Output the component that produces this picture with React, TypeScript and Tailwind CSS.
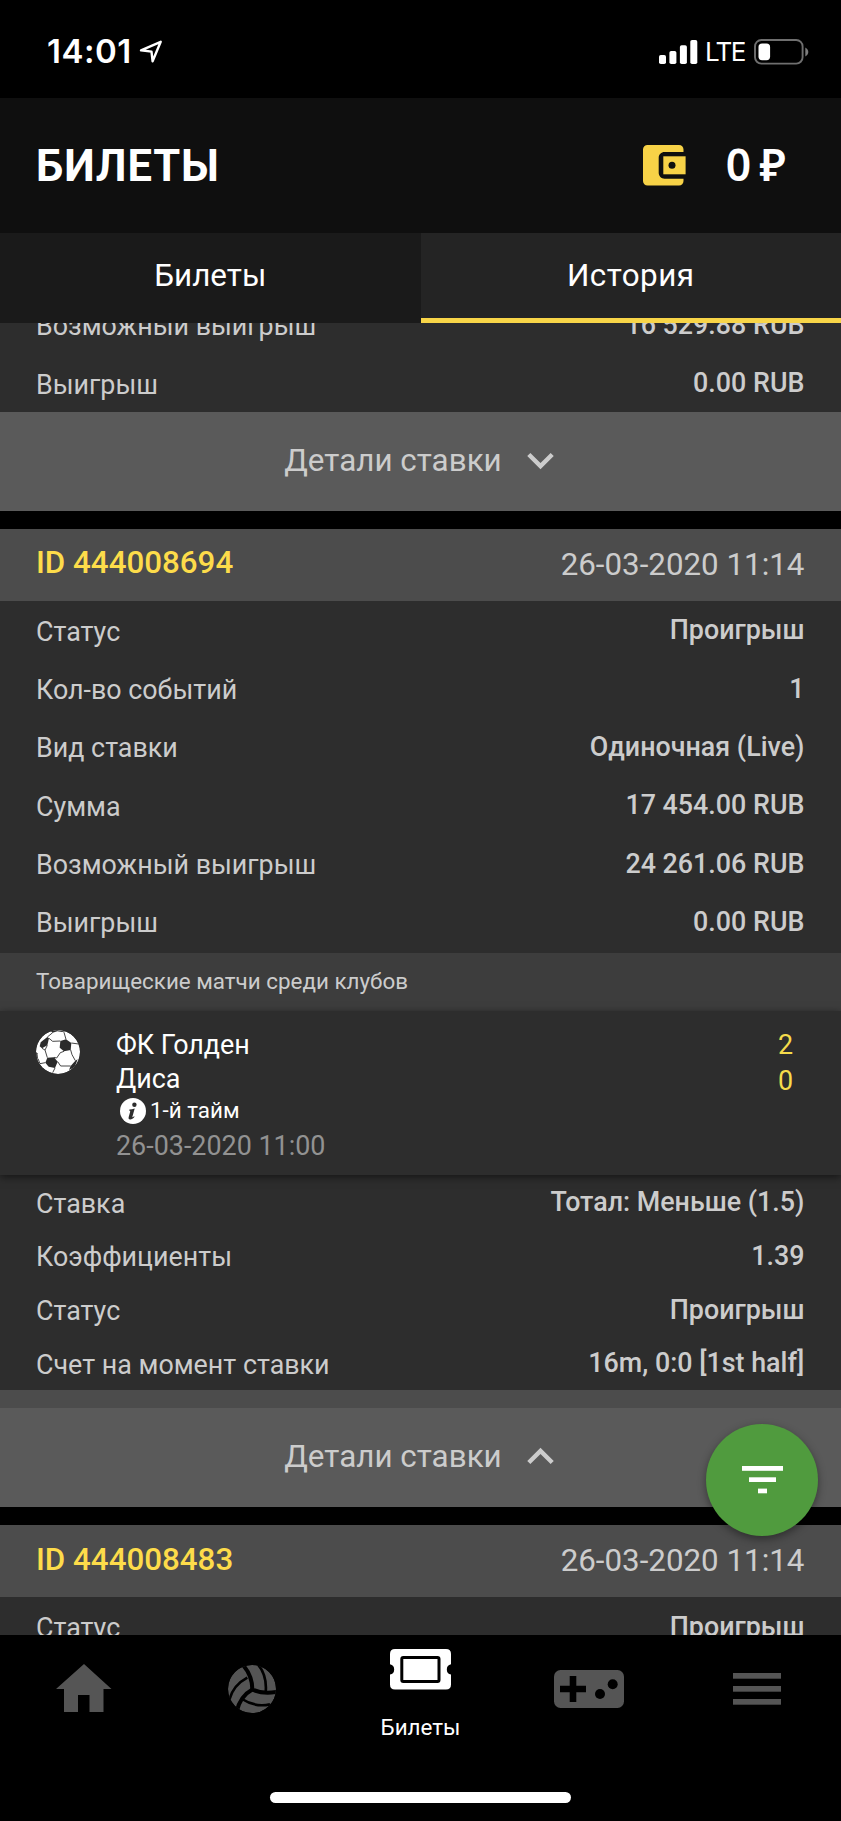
import clsx from "clsx";
import { MdExpandLess, MdExpandMore } from "react-icons/md";

interface Row {
  label: string;
  value: string;
}

const previousRows: Row[] = [
  { label: "Возможный выигрыш", value: "16 529.88 RUB" },
  { label: "Выигрыш", value: "0.00 RUB" },
];

const ticketRows: Row[] = [
  { label: "Статус", value: "Проигрыш" },
  { label: "Кол-во событий", value: "1" },
  { label: "Вид ставки", value: "Одиночная (Live)" },
  { label: "Сумма", value: "17 454.00 RUB" },
  { label: "Возможный выигрыш", value: "24 261.06 RUB" },
  { label: "Выигрыш", value: "0.00 RUB" },
];

const betRows: Row[] = [
  { label: "Ставка", value: "Тотал: Меньше (1.5)" },
  { label: "Коэффициенты", value: "1.39" },
  { label: "Статус", value: "Проигрыш" },
  { label: "Счет на момент ставки", value: "16m, 0:0 [1st half]" },
];

const LocationIcon = () => (
  <svg width="24" height="24" viewBox="0 0 24 24" fill="none">
    <path
      d="M2 10.3 21.7 1.8 13.6 21.3 12.5 11.6Z"
      stroke="white"
      strokeWidth="2.4"
      strokeLinejoin="round"
    />
  </svg>
);

const SignalIcon = () => (
  <svg width="39" height="24" viewBox="0 0 39 24" fill="white">
    <rect x="0" y="15" width="7" height="9" rx="1.8" />
    <rect x="10.4" y="11" width="7" height="13" rx="1.8" />
    <rect x="20.9" y="5.3" width="7" height="18.7" rx="1.8" />
    <rect x="31.3" y="0" width="7" height="24" rx="1.8" />
  </svg>
);

const BatteryIcon = () => (
  <svg width="56" height="26" viewBox="0 0 56 26" fill="none">
    <rect x="1" y="1" width="47.6" height="23.6" rx="6.4" stroke="#6f6f6f" strokeWidth="1.9" />
    <rect x="4.5" y="4.4" width="11.6" height="16.8" rx="3.6" fill="white" />
    <path d="M51.3 8.4c4 2 4 7 0 9z" fill="#7d7d7d" />
  </svg>
);

const WalletIcon = () => (
  <svg width="43" height="41" viewBox="0 0 43 41">
    <path
      fill="#f7d247"
      d="M4.6 0H36c2.6 0 4.5 2 4.5 4.6V7H21.6c-3.4 0-5.9 2.5-5.9 5.9v14.9c0 3.4 2.5 5.9 5.9 5.9h18.9v2.4c0 2.6-1.9 4.5-4.5 4.5H4.6C2 40.6 0 38.7 0 36.1V4.6C0 2 2 0 4.6 0Z"
    />
    <path fill="#f7d247" d="M20.3 11.3H42.6v18H20.3z" />
    <circle cx="29" cy="20.3" r="3.5" fill="#0f0f0f" />
  </svg>
);

const FootballIcon = () => (
  <svg width="44" height="44" viewBox="0 0 132 132">
    <defs>
      <clipPath id="football">
        <circle cx="66" cy="66" r="66" />
      </clipPath>
    </defs>
    <g clipPath="url(#football)">
      <circle cx="66" cy="66" r="66" fill="white" />
      <g fill="#2b2b2b">
        <path d="M73 33 90 28 106 39 104 60 84 64 71 53Z" />
        <path d="M34 83 54 82 65 95 57 114 38 110 28 98Z" />
        <path d="M14 37 34 21 39 25 34 46 18 55 11 49Z" />
        <path d="M118 92 125 88 116 112 99 120 104 108Z" />
        <path d="M44 4 62 0 88 5 84 7 64 4 50 8Z" />
        <path d="M0 66 4 70 6 86 0 84Z" />
      </g>
      <g fill="none" stroke="#2b2b2b" strokeWidth="2.6">
        <path d="M34 21 50 8M39 25 50 34 73 33M34 46 27 60 34 83M18 55 27 60M90 28 84 7M106 39 128 42M84 64 73 68 62 84 54 82M104 60 108 74 118 92M65 95 74 108 104 108M57 114 50 128M28 98 12 101 6 86" />
      </g>
    </g>
  </svg>
);

const InfoIcon = () => (
  <svg width="26" height="26" viewBox="0 0 26 26">
    <circle cx="13" cy="13" r="13" fill="white" />
    <circle cx="14.4" cy="6.7" r="2.2" fill="#2d2d2d" />
    <path
      d="M9.4 11.6c1.8-.2 3.5-.5 5.3-1.1l-2.3 8.3c-.2.7.4.6 1.6-.5l.6.5c-1.6 2-3.1 2.8-4.5 2.7-1.4-.1-1.8-1.2-1.4-2.6l1.4-5c.3-1-.1-1.4-.9-1.5z"
      fill="#2d2d2d"
    />
  </svg>
);

const FilterIcon = () => (
  <svg width="41" height="28" viewBox="0 0 41 28" fill="white">
    <rect x="0" y="0" width="41" height="4.8" />
    <rect x="7" y="11.3" width="27" height="4.7" />
    <rect x="16" y="22.6" width="9" height="4.7" />
  </svg>
);

const HomeIcon = () => (
  <svg width="56" height="48" viewBox="0 0 56 48" fill="#555555">
    <path d="M28 0 55.5 25H47.5V48H33.5V31H22V48H8V25H0Z" />
  </svg>
);

const VolleyballIcon = () => (
  <svg width="48" height="48" viewBox="0 0 144 144">
    <defs>
      <clipPath id="volleyball">
        <circle cx="72" cy="72" r="72" />
      </clipPath>
    </defs>
    <g clipPath="url(#volleyball)" fill="none" stroke="black">
      <circle cx="72" cy="72" r="72" fill="#555555" stroke="none" />
      <g strokeWidth="12">
        <path d="M73 76Q74 34 45 0" />
        <path d="M70 72Q104 90 150 80" />
        <path d="M74 73Q36 94 26 140" />
      </g>
      <g strokeWidth="8">
        <path d="M88 -4Q118 30 113 82" />
        <path d="M42 102Q82 128 126 118" />
        <path d="M58 38Q16 60 4 104" />
      </g>
    </g>
  </svg>
);

const TicketIcon = () => (
  <svg width="61" height="41" viewBox="0 0 61 41">
    <path
      fill="white"
      d="M5 0H56q5 0 5 5V15.3a5.2 5.2 0 0 0 0 10.2V35.5q0 5-5 5H5q-5 0-5-5V25.5a5.2 5.2 0 0 0 0-10.2V5q0-5 5-5Z"
    />
    <rect x="11.8" y="8.4" width="37.2" height="24" rx="1.5" fill="none" stroke="black" strokeWidth="3" />
  </svg>
);

const GamepadIcon = () => (
  <svg width="70" height="38" viewBox="0 0 70 38">
    <rect width="70" height="38" rx="6.5" fill="#555555" />
    <path d="M15.7 6h6.6v9.7H32v6.6h-9.7V32h-6.6v-9.7H6v-6.6h9.7z" fill="black" />
    <circle cx="46" cy="24" r="5" />
    <circle cx="58.7" cy="14.3" r="5" />
  </svg>
);

const MenuIcon = () => (
  <svg width="48" height="32" viewBox="0 0 48 32" fill="#555555">
    <rect width="48" height="5.7" />
    <rect y="13" width="48" height="5.7" />
    <rect y="26" width="48" height="5.7" />
  </svg>
);

const DataRow = ({ row, compact }: { row: Row; compact?: boolean }) => (
  <div
    className={clsx(
      "flex items-center justify-between pr-[36.6px] pl-9 text-[26.85px] text-[#cccccc]",
      compact ? "h-[53.8px]" : "h-[58.3px]"
    )}
  >
    <span className="mt-[3px]">{row.label}</span>
    <span className="font-medium">{row.value}</span>
  </div>
);

const TicketHeader = ({ id, date }: { id: string; date: string }) => (
  <div className="flex h-[72px] shrink-0 items-center justify-between bg-[#4c4c4c] pr-[36.6px] pl-9 text-[31.3px]">
    <span className="mb-[3px] font-medium text-[#fddc4a]">ID {id}</span>
    <span className="text-[#cccccc]">{date}</span>
  </div>
);

const DetailsButton = ({ open }: { open?: boolean }) => (
  <button className="flex h-[99px] w-full shrink-0 items-center justify-center bg-[#5a5a5a] pb-[2px] pl-[10px] text-[31.4px] text-[#cccccc]">
    Детали ставки
    {open ? (
      <MdExpandLess className="ml-3 size-[53px]" />
    ) : (
      <MdExpandMore className="ml-3 size-[53px]" />
    )}
  </button>
);

const StatusBar = () => (
  <div className="flex h-[98px] shrink-0 items-center justify-between pt-[5px] pr-[31px] pl-[47px] font-['Inter',sans-serif] text-white">
    <div className="flex items-center gap-[7px]">
      <span className="text-[33px] font-semibold tracking-[0.5px]">14:01</span>
      <LocationIcon />
    </div>
    <div className="flex items-center">
      <SignalIcon />
      <span className="ml-[7px] text-[26px] tracking-[-1.5px]">LTE</span>
      <span className="ml-[9px]">
        <BatteryIcon />
      </span>
    </div>
  </div>
);

const MatchInfo = () => (
  <div className="relative flex h-[164px] px-9 pt-[17px] text-[26.9px] shadow-[0_2px_8px_rgba(0,0,0,0.55)]">
    <div className="mt-[2px] w-20">
      <FootballIcon />
    </div>
    <div className="mt-px flex-1 leading-[33.5px] text-white">
      <div>ФК Голден</div>
      <div>Диса</div>
      <div className="flex h-[29px] items-center gap-1 pl-1 text-[22.4px]">
        <InfoIcon />
        <span>1-й тайм</span>
      </div>
      <div className="mt-[2px] leading-[38px] text-[#929292]">26-03-2020 11:00</div>
    </div>
    <div className="-mt-px w-[27px] leading-[36px] text-[#f5db4b]">
      <div>2</div>
      <div>0</div>
    </div>
  </div>
);

export default function App() {
  return (
    <div className="relative flex h-[1821px] w-[841px] flex-col overflow-hidden bg-black font-['Roboto',sans-serif]">
      <StatusBar />

      <header className="flex h-[135px] shrink-0 items-center justify-between bg-[#0f0f0f] pr-[55px] pl-9 text-white">
        <h1 className="mt-[2px] text-[43.5px] font-bold tracking-[0.9px]">БИЛЕТЫ</h1>
        <div className="flex items-center">
          <WalletIcon />
          <span className="mb-[2px] ml-10 font-['Noto_Sans',sans-serif] text-[44.5px] font-semibold [word-spacing:-3.2px]">
            0 ₽
          </span>
        </div>
      </header>

      <div className="flex h-[90px] shrink-0 text-[31.4px] text-white">
        <div className="flex flex-1 items-center justify-center bg-[#1a1a1a] pb-1">Билеты</div>
        <div className="flex flex-1 items-center justify-center border-b-[5px] border-[#f8d548] bg-[#242424] pt-px tracking-[0.5px]">
          История
        </div>
      </div>

      <main className="flex min-h-0 flex-1 flex-col overflow-hidden">
        <div className="-mt-[27.3px] shrink-0 bg-[#2d2d2d]">
          {previousRows.map((row) => (
            <DataRow key={row.label} row={row} />
          ))}
        </div>
        <DetailsButton />

        <div className="mt-[18px] shrink-0 bg-[#2d2d2d]">
          <TicketHeader id="444008694" date="26-03-2020 11:14" />
          <div className="h-[352px]">
            {ticketRows.map((row) => (
              <DataRow key={row.label} row={row} />
            ))}
          </div>
          <div className="flex h-[58px] items-center bg-[#3d3d3d] px-9 pb-px text-[22.4px] text-[#cccccc]">
            Товарищеские матчи среди клубов
          </div>
          <MatchInfo />
          {betRows.map((row) => (
            <DataRow key={row.label} row={row} compact />
          ))}
        </div>
        <div className="h-[18px] shrink-0 bg-[#4c4c4c]" />
        <DetailsButton open />

        <div className="mt-[18px] shrink-0 bg-[#2d2d2d]">
          <TicketHeader id="444008483" date="26-03-2020 11:14" />
          <DataRow row={ticketRows[0]} />
        </div>
      </main>

      <nav className="relative flex h-[186px] shrink-0 bg-black text-[22.4px] text-white">
        <div className="flex flex-1 justify-center pt-[29px]">
          <HomeIcon />
        </div>
        <div className="flex flex-1 justify-center pt-[30px]">
          <VolleyballIcon />
        </div>
        <div className="flex flex-1 flex-col items-center pt-[14.4px]">
          <TicketIcon />
          <span className="mt-[20.6px]">Билеты</span>
        </div>
        <div className="flex flex-1 justify-center pt-[35px]">
          <GamepadIcon />
        </div>
        <div className="flex flex-1 justify-center pt-[38px]">
          <MenuIcon />
        </div>
        <div className="absolute bottom-[18px] left-[270px] h-[11px] w-[301px] rounded-full bg-white" />
      </nav>

      <button className="absolute top-[1424px] left-[706px] flex size-28 items-center justify-center rounded-full bg-[#509b3e] shadow-[0_3px_8px_rgba(0,0,0,0.4)]">
        <FilterIcon />
      </button>
    </div>
  );
}
